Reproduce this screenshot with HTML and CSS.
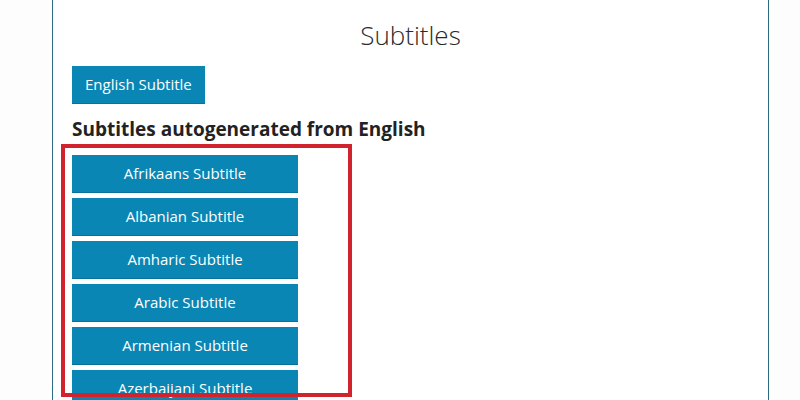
FILE: index.html
```html
<!DOCTYPE html>
<html>
<head>
<meta charset="utf-8">
<link rel="stylesheet" href="styles.css">
</head>
<body>
<div class="panel">
  <h1 class="title">Subtitles</h1>
  <div class="primary">
    <a class="btn btn-auto">English Subtitle</a>
  </div>
  <h2 class="section">Subtitles autogenerated from English</h2>
  <div class="list">
    <a class="btn btn-wide">Afrikaans Subtitle</a>
    <a class="btn btn-wide">Albanian Subtitle</a>
    <a class="btn btn-wide">Amharic Subtitle</a>
    <a class="btn btn-wide">Arabic Subtitle</a>
    <a class="btn btn-wide">Armenian Subtitle</a>
    <a class="btn btn-wide">Azerbaijani Subtitle</a>
  </div>
  <div class="highlight"></div>
</div>
</body>
</html>
```
FILE: styles.css
```css
html, body {
  margin: 0;
  padding: 0;
  height: 400px;
  overflow: hidden;
  background: #fdfdfd;
  font-family: "Open Sans", "Liberation Sans", sans-serif;
}
.panel {
  position: relative;
  margin-left: 52px;
  width: 677px;
  height: 400px;
  padding: 0 19px;
  border-left: 1px solid #2d6b82;
  border-right: 1px solid #2d6b82;
  background: #fff;
}
.title {
  margin: 0;
  padding-top: 16px;
  font-weight: 300;
  font-size: 26px;
  line-height: 38px;
  text-align: center;
  color: #2a2a2a;
}
.primary {
  display: flex;
  margin-top: 12px;
}
.btn {
  display: block;
  box-sizing: border-box;
  height: 38px;
  line-height: 37px;
  background: #0a86b4;
  color: #fff;
  font-size: 15px;
  text-align: center;
  border-bottom: 1px solid #08729a;
}
.btn-auto {
  padding: 0 13px;
}
.section {
  margin: 12px 0 0;
  font-size: 19px;
  font-weight: 700;
  line-height: 26px;
  color: #222;
}
.list {
  display: flex;
  flex-direction: column;
  gap: 5px;
  margin-top: 13px;
}
.btn-wide {
  width: 226px;
}
.highlight {
  position: absolute;
  left: 8px;
  top: 144px;
  width: 283px;
  height: 245px;
  border: 4px solid #d0232e;
  pointer-events: none;
}
```
